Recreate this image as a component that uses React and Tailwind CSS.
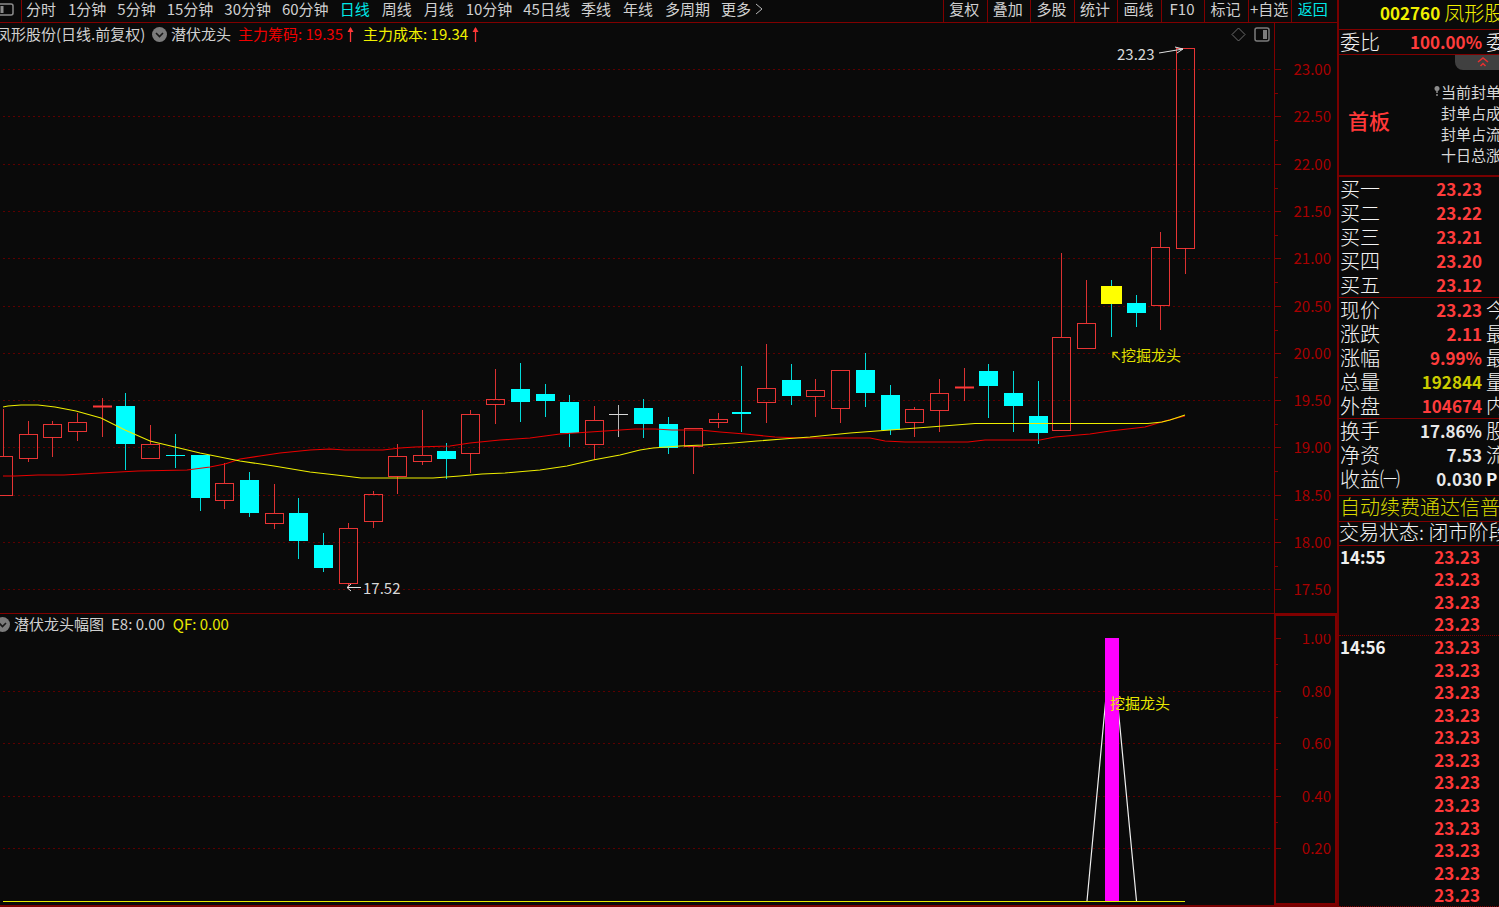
import React from "react";

const PERIODS = ["分时", "1分钟", "5分钟", "15分钟", "30分钟", "60分钟", "日线", "周线", "月线", "10分钟", "45日线", "季线", "年线", "多周期", "更多"];
const TOOLS = ["复权", "叠加", "多股", "统计", "画线", "F10", "标记", "+自选", "返回"];

// [center x, high, body top, body bottom, low, kind]
const CANDLES = [
  [3, 409, 456, 495, 495, "up"],
  [28, 421, 434, 458, 462, "up"],
  [52, 421, 424, 437, 457, "up"],
  [77, 413, 422, 431, 441, "up"],
  [102, 398, 406, 407, 437, "up"],
  [125, 393, 406, 444, 470, "down"],
  [150, 425, 444, 458, 458, "up"],
  [175, 434, 455, 455, 468, "down"],
  [200, 455, 455, 498, 511, "down"],
  [224, 463, 483, 500, 509, "up"],
  [249, 472, 480, 513, 517, "down"],
  [274, 484, 513, 523, 529, "up"],
  [298, 498, 513, 541, 559, "down"],
  [323, 533, 545, 568, 572, "down"],
  [348, 523, 528, 583, 587, "up"],
  [373, 491, 494, 521, 528, "up"],
  [397, 444, 456, 476, 494, "up"],
  [422, 410, 455, 461, 465, "up"],
  [446, 443, 451, 459, 479, "down"],
  [470, 410, 414, 453, 473, "up"],
  [495, 369, 399, 404, 424, "up"],
  [520, 363, 389, 402, 422, "down"],
  [545, 384, 394, 401, 417, "down"],
  [569, 395, 402, 433, 447, "down"],
  [594, 406, 420, 444, 460, "up"],
  [618, 405, 414, 415, 437, "flat"],
  [643, 399, 408, 424, 438, "down"],
  [668, 417, 424, 448, 454, "down"],
  [693, 428, 428, 446, 474, "up"],
  [718, 413, 419, 422, 428, "up"],
  [741, 366, 412, 414, 432, "down"],
  [766, 344, 388, 402, 423, "up"],
  [791, 364, 380, 396, 405, "down"],
  [815, 379, 390, 396, 417, "up"],
  [840, 370, 370, 408, 423, "up"],
  [865, 353, 370, 393, 407, "down"],
  [890, 385, 395, 430, 435, "down"],
  [914, 407, 409, 422, 437, "up"],
  [939, 379, 393, 410, 432, "up"],
  [964, 368, 387, 388, 401, "up"],
  [988, 364, 371, 386, 418, "down"],
  [1013, 371, 393, 406, 432, "down"],
  [1038, 381, 416, 433, 444, "down"],
  [1061, 253, 337, 430, 430, "up"],
  [1086, 280, 323, 348, 348, "up"],
  [1111, 280, 286, 304, 337, "signal"],
  [1136, 295, 303, 313, 327, "down"],
  [1160, 232, 247, 305, 330, "up"],
  [1185, 48, 48, 248, 274, "up"],
];

const COST_LINE =
  "3,407 8,406 21,405 38,405 55,407 76,411 101,418 125,430 150,441 175,447 200,453 240,461 274,466 310,472 345,476 361,478 433,478 460,476 482,474 505,473 540,470 567,466 593,460 620,455 640,450 653,448 680,446 703,445 733,443 757,441 783,439 810,437 850,433 890,430 930,427 975,423.5 1148,423.5 1162,422 1170,420 1185,415";
const CHIP_LINE =
  "3,476 15,476 38,475 64,475 100,473 138,471 187,470 210,467 225,464 240,459 260,456 280,453 310,450 330,449 345,450 383,450 400,448 415,447 450,446 470,443 500,440 530,438 560,434 590,432 620,430 635,429 655,429 672,430 700,430 720,432 745,434 775,437 800,438 870,438 885,441 905,442 968,442 985,440 1040,440 1055,437 1090,434 1110,431 1145,427 1165,421 1185,416";

const PRICES = ["23.00", "22.50", "22.00", "21.50", "21.00", "20.50", "20.00", "19.50", "19.00", "18.50", "18.00", "17.50"];
const RATIOS = ["1.00", "0.80", "0.60", "0.40", "0.20"];
const FONT = "font-['Noto_Sans_CJK_SC',sans-serif]";

function Candle({ data }) {
  const [cx, high, top, bottom, low, kind] = data;
  const color = kind === "up" ? "#ff3838" : kind === "flat" ? "#d8d8d8" : "#00ffff";
  const x = cx + 0.5;
  const thin = bottom - top < 2;
  return (
    <g stroke={color} fill="none">
      <path d={`M${x} ${high}V${top}M${x} ${bottom}V${low}`} strokeOpacity="0.85" />
      {thin && kind !== "down" && <path d={`M${cx - 9} ${top + 0.5}H${cx + 10}`} strokeWidth={kind === "up" ? 2 : 1} />}
      {thin && kind === "flat" && <path d={`M${x} ${top}V${bottom}`} />}
      {thin && kind === "down" && <path d={`M${cx - 9} ${top + 0.5}H${cx + 10}`} />}
      {!thin && kind === "up" && <rect x={x - 9} y={top + 0.5} width="18" height={bottom - top} strokeOpacity="0.9" />}
      {!thin && kind === "down" && <rect x={cx - 9} y={top} width="19" height={bottom - top} fill={color} stroke="none" />}
      {kind === "signal" && <rect x={cx - 10} y={top} width="21" height={bottom - top} fill="#ffff00" stroke="none" />}
    </g>
  );
}

function MainChart() {
  return (
    <svg viewBox="0 46 1337 567" preserveAspectRatio="xMinYMin meet" className="block min-h-0 w-full flex-1 text-[15px]" role="img" aria-label="日线">
      <path d="M1274.5 46V613" stroke="#800000" />
      {PRICES.map((p, i) => {
        const y = Math.round(69 + i * 47.3) + 0.5;
        return (
          <g key={p} stroke="#800000">
            <path d={`M3 ${y}H1273`} strokeDasharray="2 3" stroke="#5c0000" />
            <path d={`M1275 ${y}H1281M1275 ${y + 24}H1278`} />
            <text x="1331" y={y + 5} textAnchor="end" fill="#a80000" stroke="none">{p}</text>
          </g>
        );
      })}
      {CANDLES.map((c) => <Candle key={c[0]} data={c} />)}
      <polyline points={CHIP_LINE} fill="none" stroke="#e80000" strokeWidth="1.1" />
      <polyline points={COST_LINE} fill="none" stroke="#eeee00" strokeWidth="1.1" />
      <path d="M347 587.5H361M347 587.5L351 584M347 587.5L351 591" stroke="#e0e0e0" fill="none" />
      <text x="363" y="594" fill="#d8d8d8">17.52</text>
      <text x="1117" y="60" fill="#d8d8d8">23.23</text>
      <path d="M1159 53L1183 49M1175 47L1183 49L1177 53" stroke="#e0e0e0" fill="none" />
      <path d="M1120 360L1113 353M1113 358V352.5H1118" stroke="#d8d800" fill="none" strokeWidth="1.3" />
      <text x="1121" y="361" fill="#e0e000">挖掘龙头</text>
    </svg>
  );
}

function SubChart() {
  return (
    <svg viewBox="0 634 1337 271" preserveAspectRatio="xMinYMin meet" className="block min-h-0 w-full flex-1 text-[15px]" role="img" aria-label="潜伏龙头幅图">
      <path d="M1275 634V904H1336V634" stroke="#800000" strokeWidth="2" fill="none" />
      {RATIOS.map((r, i) => {
        const y = Math.round(638 + i * 52.6) + 0.5;
        return (
          <g key={r} stroke="#800000">
            {i > 0 && <path d={`M3 ${y}H1273`} strokeDasharray="2 3" stroke="#5c0000" />}
            <path d={`M1275 ${y}H1281`} />
            {i < 4 && <path d={`M1275 ${y + 26}H1278`} />}
            <text x="1331" y={y + 5} textAnchor="end" fill="#a80000" stroke="none">{r}</text>
          </g>
        );
      })}
      <path d="M1087 901L1111.5 638L1136.5 901" stroke="#f0f0f0" fill="none" strokeWidth="1.2" />
      <rect x="1105" y="638" width="14" height="263" fill="#ff00ff" />
      <path d="M3 901.5H1185" stroke="#e8e800" strokeWidth="1.2" />
      <text x="1110" y="709" fill="#e8e800">挖掘龙头</text>
    </svg>
  );
}

function MenuDot({ label }) {
  return (
    <button type="button" aria-label={label} className="block shrink-0">
      <svg width="15" height="15" viewBox="0 0 15 15">
        <circle cx="7.5" cy="7.5" r="7.5" fill="#7c7c7c" />
        <path d="M4 6L7.5 9.5L11 6" stroke="#181818" strokeWidth="1.6" fill="none" />
      </svg>
    </button>
  );
}

function UpArrow() {
  return (
    <svg width="7" height="15" viewBox="0 0 7 15" className="shrink-0">
      <path d="M3.5 1V15" stroke="#ff3838" strokeWidth="1.3" />
      <path d="M0.5 5L3.5 0L6.5 5Z" fill="#ff3838" />
    </svg>
  );
}

function QuoteRows({ rows }) {
  return (
    <dl>
      {rows.map(([label, value, color, next]) => (
        <div key={label} className="flex h-6 items-center overflow-hidden whitespace-nowrap pl-px">
          <dt className="w-[60px] shrink-0 text-xl leading-6">{label}</dt>
          <dd className={`w-[82px] shrink-0 text-right text-[17px] font-bold leading-6 ${color}`}>{value}</dd>
          <dd className={next === "P" ? "pl-1 text-[17px] font-bold leading-6" : "pl-1 text-xl leading-6"}>{next}</dd>
        </div>
      ))}
    </dl>
  );
}

const RED = "text-[#ff3c3c]";
const DIM_YELLOW = "text-[#cccc00]";
const WHITE = "text-[#e8e8e8]";

const BIDS = [
  ["买一", "23.23", RED, ""],
  ["买二", "23.22", RED, ""],
  ["买三", "23.21", RED, ""],
  ["买四", "23.20", RED, ""],
  ["买五", "23.12", RED, ""],
];
const QUOTE = [
  ["现价", "23.23", RED, "今"],
  ["涨跌", "2.11", RED, "最"],
  ["涨幅", "9.99%", RED, "最"],
  ["总量", "192844", DIM_YELLOW, "量"],
  ["外盘", "104674", RED, "内"],
];
const BASICS = [
  ["换手", "17.86%", WHITE, "股"],
  ["净资", "7.53", WHITE, "流"],
  ["收益㈠", "0.030", WHITE, "P"],
];
const TICKS = Array.from({ length: 16 }, (_, i) => ({
  time: i === 0 ? "14:55" : i === 4 ? "14:56" : "",
  price: "23.23",
  last: i === 3 || i === 15,
}));

function Sidebar() {
  return (
    <aside className="flex w-[162px] shrink-0 flex-col overflow-hidden border-l-2 border-[#780000] font-light text-[#f4f4f4]">
      <h1 className="flex h-[30px] shrink-0 items-center gap-1 whitespace-nowrap border-b border-[#800000] pb-1 pl-[41px] text-[#f0f000]">
        <span className="text-[17px] font-bold">002760</span>
        <span className="text-xl font-light">凤形股</span>
      </h1>
      <div className="h-[25px] shrink-0 border-b border-[#800000]">
        <QuoteRows rows={[["委比", "100.00%", RED, "委"]]} />
      </div>
      <section className="flex h-[122px] shrink-0 flex-col border-b-2 border-[#780000]">
        <button type="button" aria-label="收起" className="-mr-3 flex h-[15px] w-[56px] items-start justify-center self-end rounded-bl-lg bg-[#404040] pt-[2px]">
          <svg width="12" height="10" viewBox="0 0 12 10" fill="none" stroke="#e83030" strokeWidth="1.5">
            <path d="M1 5L6 1L11 5M3.500 9L6 6.500L8.500 9" />
          </svg>
        </button>
        <div className="flex flex-1 items-center whitespace-nowrap">
          <strong className="w-[94px] shrink-0 pb-1 pl-[9px] text-[21px] font-medium text-[#ff3838]">首板</strong>
          <svg width="8" height="10" viewBox="0 0 8 10" className="mt-4 shrink-0 self-start">
            <circle cx="4" cy="2.500" r="2.500" fill="#8c8c8c" />
            <path d="M4 4V7M4 8V10" stroke="#8c8c8c" strokeWidth="1.500" />
          </svg>
          <ul className="text-[15px] font-normal leading-[21px] text-[#d8d8d8]">
            <li>当前封单</li>
            <li>封单占成</li>
            <li>封单占流</li>
            <li>十日总涨</li>
          </ul>
        </div>
      </section>
      <section className="shrink-0 border-b border-[#800000]"><QuoteRows rows={BIDS} /></section>
      <section className="shrink-0 border-b border-[#800000]"><QuoteRows rows={QUOTE} /></section>
      <section className="shrink-0 border-b border-[#800000] pb-1"><QuoteRows rows={BASICS} /></section>
      <p className="h-[26px] shrink-0 overflow-hidden whitespace-nowrap border-b border-[#800000] pl-px text-xl leading-[22px] text-[#d8d800]">自动续费通达信普</p>
      <p className="h-6 shrink-0 overflow-hidden whitespace-nowrap border-b border-[#800000] text-xl leading-5">交易状态: 闭市阶段</p>
      <ol className="grid min-h-0 flex-1 grid-rows-16 text-[17px] font-bold">
        {TICKS.map((t, i) => (
          <li key={i} className={`flex items-center pb-0.5 pl-px leading-none ${t.last ? "border-b border-dotted border-[#800000]" : ""}`}>
            <time className="w-[60px] text-[#f0f0f0]">{t.time}</time>
            <span className="w-[80px] text-right text-[#ff3838]">{t.price}</span>
          </li>
        ))}
      </ol>
    </aside>
  );
}

export default function App() {
  return (
    <div className={`flex h-screen overflow-hidden bg-[#0a0a0a] text-[#d0d0d0] ${FONT}`}>
      <main className="flex min-w-0 flex-1 flex-col text-[15px]">
        <header className="flex h-[23px] shrink-0 items-stretch justify-between border-b border-[#800000] leading-[18px]">
          <nav className="flex min-w-0 whitespace-nowrap">
            <button type="button" aria-label="侧栏" className="flex w-[22px] shrink-0 items-center border-r border-[#800000] pb-1">
              <svg width="14" height="13" viewBox="0 0 14 13" fill="none">
                <rect x="-3" y="1" width="16" height="11" rx="2" stroke="#8c8c8c" strokeWidth="1.500" />
                <path d="M2 3V10" stroke="#8c8c8c" strokeWidth="3" />
              </svg>
            </button>
            <div className="flex items-start gap-[11px] pl-1">
              {PERIODS.map((p) => (
                <button key={p} type="button" className={`min-w-[31px] text-left ${p === "日线" ? "text-[#00e8e8]" : ""}`}>{p}</button>
              ))}
              <svg width="8" height="12" viewBox="0 0 8 12" className="-ml-2 mt-[3px]" fill="none" stroke="#b8b8b8">
                <path d="M1 1L7 6L1 11" />
              </svg>
            </div>
          </nav>
          <div className="mr-0.5 grid w-[392px] shrink-0 grid-cols-9">
            {TOOLS.map((t) => (
              <button key={t} type="button" className={`flex justify-center whitespace-nowrap border-l border-[#800000] pr-0.5 ${t === "返回" ? "text-[#00e8e8]" : ""}`}>{t}</button>
            ))}
          </div>
        </header>

        <section className="flex min-h-0 flex-[590_1_0%] flex-col">
          <div className="flex h-[23px] shrink-0 items-stretch">
            <div className="flex min-w-0 flex-1 items-center whitespace-nowrap pr-1 leading-[20px]">
              <span className="-ml-1 w-[156px] shrink-0 pb-0.5">凤形股份(日线.前复权)</span>
              <MenuDot label="指标菜单" />
              <span className="pb-0.5 pl-1">潜伏龙头</span>
              <span className="pb-0.5 pl-[7px] pr-1 text-[#f00000]">主力筹码: 19.35</span>
              <UpArrow />
              <span className="pb-0.5 pl-[9px] pr-1 text-[#f0f000]">主力成本: 19.34</span>
              <UpArrow />
              <div className="ml-auto flex items-center gap-2">
                <button type="button" aria-label="标记">
                  <svg width="15" height="15" viewBox="0 0 15 15" fill="none" stroke="#6c6c6c"><path d="M7.500 1L14 7.500L7.500 14L1 7.500Z" /></svg>
                </button>
                <button type="button" aria-label="面板">
                  <svg width="16" height="15" viewBox="0 0 16 15" fill="none" stroke="#7c7c7c" strokeWidth="1.500">
                    <rect x="1" y="1" width="14" height="13" rx="2" />
                    <path d="M11 3V12" strokeWidth="4" />
                  </svg>
                </button>
              </div>
            </div>
            <div className="w-[63px] shrink-0 border-l border-[#800000]" />
          </div>
          <MainChart />
        </section>

        <section className="flex min-h-0 flex-[292_1_0%] flex-col border-b-2 border-[#780000]">
          <div className="flex h-[21px] shrink-0 items-stretch border-t border-[#800000]">
            <div className="flex min-w-0 flex-1 items-center whitespace-nowrap leading-[20px]">
              <div className="-ml-[5px] flex"><MenuDot label="副图菜单" /></div>
              <span className="pl-1">潜伏龙头幅图</span>
              <span className="pl-[7px]">E8: 0.00</span>
              <span className="pl-2 text-[#e8e800]">QF: 0.00</span>
            </div>
            <div className="w-[63px] shrink-0 border-2 border-b-0 border-[#800000]" />
          </div>
          <SubChart />
        </section>
      </main>
      <Sidebar />
    </div>
  );
}
